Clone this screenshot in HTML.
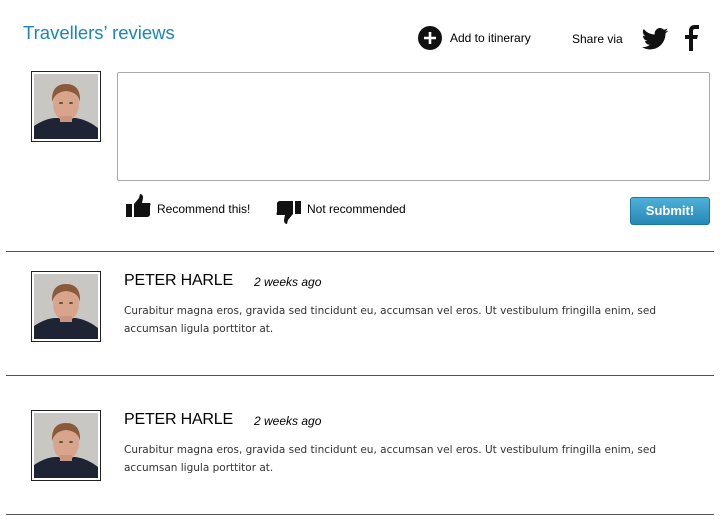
<!DOCTYPE html>
<html><head><style>
body{margin:0;width:720px;height:516px;background:#fff;font-family:"Liberation Sans",sans-serif;position:relative;overflow:hidden}
.a{position:absolute}
.av{position:absolute;width:68px;height:69px;border:1px solid #222;background:#fff}
.av svg{position:absolute;left:2px;top:2px}
.hr{position:absolute;left:6px;width:708px;height:1px;background:#555}
.name{font-size:16px;color:#000;letter-spacing:-0.2px}
.ago{font-size:12px;font-style:italic}
.txt{font-family:"DejaVu Sans",sans-serif;font-size:10.5px;color:#333;line-height:18px;width:545px}
</style></head><body>
<svg width="0" height="0" style="position:absolute"><defs>
<g id="face">
<rect width="64" height="65" fill="#c9c7c4"/>
<path d="M0 65 L0 52 Q12 44 22 44 L42 44 Q54 46 64 54 L64 65Z" fill="#1e2433"/>
<ellipse cx="32" cy="30" rx="13" ry="17" fill="#d8a48c"/>
<path d="M18 28 Q17 10 32 10 Q47 10 46 28 Q44 18 32 17 Q21 18 18 28Z" fill="#8a5a3a"/>
<rect x="26" y="42" width="12" height="6" fill="#c99580"/>
<ellipse cx="27" cy="29" rx="2" ry="1" fill="#553"/><ellipse cx="37" cy="29" rx="2" ry="1" fill="#553"/>
</g>
<g id="thumb"><rect x="0" y="10" width="6" height="13" fill="#111"/><path d="M8 10 L13 4 L14 0 Q17 0 17 4 L16 9 L24 9 Q25 10 24 12 L24 21 Q23 23 21 23 L8 23Z" fill="#111"/></g>
</defs></svg>

<div class="a" style="left:23px;top:22px;font-size:18.5px;color:#1a86b8">Travellers’ reviews</div>
<svg class="a" style="left:418px;top:26px" width="24" height="24"><circle cx="12" cy="12" r="12" fill="#111"/><path d="M12 6v12M6 12h12" stroke="#fff" stroke-width="2.6"/></svg>
<div class="a" style="left:450px;top:31px;font-size:12px">Add to itinerary</div>
<div class="a" style="left:572px;top:32px;font-size:12px">Share via</div>
<svg class="a" style="left:640px;top:28px" width="30" height="22" viewBox="0 0 24 20"><path d="M24 2.4a10 10 0 0 1-2.8.8A5 5 0 0 0 23.3.4a10 10 0 0 1-3.1 1.2A4.9 4.9 0 0 0 11.8 6 14 14 0 0 1 1.7.9a4.9 4.9 0 0 0 1.5 6.6 4.9 4.9 0 0 1-2.2-.6 4.9 4.9 0 0 0 3.9 4.8 5 5 0 0 1-2.2.1 4.9 4.9 0 0 0 4.6 3.4A9.9 9.9 0 0 1 0 17.3 14 14 0 0 0 7.5 19.5c9 0 14-7.5 14-14v-.6A10 10 0 0 0 24 2.4z" fill="#111"/></svg>
<svg class="a" style="left:684px;top:25px" width="16" height="26" viewBox="0 0 16 26"><path d="M5 26V14H1V10H5V6Q5 0 11 0H15V4H11Q9 4 9 6V10H14L13 14H9V26Z" fill="#111"/></svg>

<div class="av" style="left:31px;top:71px"><svg width="64" height="65"><use href="#face"/></svg></div>
<div class="a" style="left:117px;top:72px;width:591px;height:107px;border:1px solid #aaa;border-radius:2px"></div>

<svg class="a" style="left:126px;top:194px" width="25" height="24" viewBox="0 0 25 24"><use href="#thumb"/></svg>
<div class="a" style="left:157px;top:202px;font-size:12px">Recommend this!</div>
<svg class="a" style="left:276px;top:199px" width="25" height="25" viewBox="0 0 25 25"><g transform="rotate(180 12.5 12.5)"><use href="#thumb"/></g></svg>
<div class="a" style="left:307px;top:202px;font-size:12px">Not recommended</div>
<div class="a" style="left:630px;top:197px;width:78px;height:26px;border:1px solid #1a7aa0;border-radius:3px;background:linear-gradient(#4fb0d8,#2588b6);color:#fff;font-weight:bold;font-size:13px;text-align:center;line-height:26px">Submit!</div>

<div class="hr" style="top:251px"></div>
<div class="av" style="left:31px;top:271px"><svg width="64" height="65"><use href="#face"/></svg></div>
<div class="a name" style="left:124px;top:272px">PETER HARLE</div>
<div class="a ago" style="left:254px;top:275px">2 weeks ago</div>
<div class="a txt" style="left:124px;top:302px">Curabitur magna eros, gravida sed tincidunt eu, accumsan vel eros. Ut vestibulum fringilla enim, sed accumsan ligula porttitor at.</div>

<div class="hr" style="top:375px"></div>
<div class="av" style="left:31px;top:410px"><svg width="64" height="65"><use href="#face"/></svg></div>
<div class="a name" style="left:124px;top:411px">PETER HARLE</div>
<div class="a ago" style="left:254px;top:414px">2 weeks ago</div>
<div class="a txt" style="left:124px;top:441px">Curabitur magna eros, gravida sed tincidunt eu, accumsan vel eros. Ut vestibulum fringilla enim, sed accumsan ligula porttitor at.</div>
<div class="hr" style="top:514px"></div>
</body></html>
